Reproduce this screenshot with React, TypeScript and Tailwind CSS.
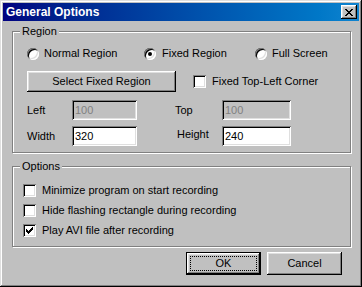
import React from 'react';

const raised =
  'shadow-[inset_-1px_-1px_#000,inset_1px_1px_#fff,inset_-2px_-2px_#808080,inset_2px_2px_#dfdfdf]';
const sunken =
  'shadow-[inset_1px_1px_#808080,inset_-1px_-1px_#fff,inset_2px_2px_#000,inset_-2px_-2px_#dfdfdf]';

function Radio({ checked }: { checked?: boolean }) {
  return (
    <span className={`w-[12px] h-[12px] rounded-full bg-white flex items-center justify-center shrink-0 ${sunken}`}>
      {checked && <span className="w-[4px] h-[4px] rounded-full bg-black" />}
    </span>
  );
}

function CheckMark() {
  const px: [number, number][] = [
    [6, 0], [5, 1], [6, 1], [0, 2], [4, 2], [5, 2], [6, 2],
    [0, 3], [1, 3], [3, 3], [4, 3], [5, 3],
    [0, 4], [1, 4], [2, 4], [3, 4], [4, 4],
    [1, 5], [2, 5], [3, 5], [2, 6],
  ];
  return (
    <svg width="7" height="7" viewBox="0 0 7 7" shapeRendering="crispEdges">
      {px.map(([x, y]) => <rect key={`${x}-${y}`} x={x} y={y} width="1" height="1" fill="#000" />)}
    </svg>
  );
}

function Check({ checked }: { checked?: boolean }) {
  return (
    <span className={`w-[13px] h-[13px] bg-white flex items-center justify-center shrink-0 ${sunken}`}>
      {checked && <CheckMark />}
    </span>
  );
}

function CloseGlyph() {
  const rows = ['xx....xx', '.xx..xx.', '..xxxx..', '...xx...', '..xxxx..', '.xx..xx.', 'xx....xx'];
  return (
    <svg width="8" height="7" viewBox="0 0 8 7" shapeRendering="crispEdges">
      {rows.flatMap((r, y) =>
        r.split('').map((c, x) => (c === 'x' ? <rect key={`${x}-${y}`} x={x} y={y} width="1" height="1" fill="#000" /> : null))
      )}
    </svg>
  );
}

function Field({ value, disabled, w }: { value: string; disabled?: boolean; w: string }) {
  return (
    <div className={`${w} h-[20px] flex items-center pl-[3px] ${disabled ? 'bg-[#c0c0c0] text-[#808080]' : 'bg-white text-black'} ${sunken}`}>
      {value}
    </div>
  );
}

function Group({ label, h, children }: { label: string; h: string; children: React.ReactNode }) {
  return (
    <div className={`relative w-[339px] ${h} border border-[#808080] shadow-[inset_1px_1px_#fff,1px_1px_#fff]`}>
      <span className="absolute left-[7px] -top-[8px] px-[2px] bg-[#c0c0c0] leading-[14px]">{label}</span>
      {children}
    </div>
  );
}

export default function App() {
  return (
    <div className="w-[362px] h-[287px] bg-[#c0c0c0] p-[3px] flex flex-col font-['Liberation_Sans',Arial,sans-serif] text-[11px] text-black shadow-[inset_-1px_-1px_#000,inset_1px_1px_#dfdfdf,inset_-2px_-2px_#808080,inset_2px_2px_#fff]">
      <div className="h-[18px] flex items-center justify-between pl-[3px] pr-[2px] bg-gradient-to-r from-[#000080] to-[#1084d0]">
        <span className="text-white font-bold text-[12px]">General Options</span>
        <span className={`w-[16px] h-[14px] bg-[#c0c0c0] flex items-center justify-center ${raised}`}>
          <CloseGlyph />
        </span>
      </div>

      <div className="pl-[9px] mt-[10px]">
        <Group label="Region" h="h-[122px]">
          <div className="flex flex-col pl-[14px] pt-[15px]">
            <div className="flex h-[13px] items-center">
              <div className="w-[117px] flex items-center gap-[5px]"><Radio />Normal Region</div>
              <div className="w-[111px] flex items-center gap-[6px]"><Radio checked />Fixed Region</div>
              <div className="flex items-center gap-[5px]"><Radio />Full Screen</div>
            </div>
            <div className="flex items-center mt-[11px]">
              <div className={`w-[149px] h-[21px] flex items-center justify-center ${raised}`}>Select Fixed Region</div>
              <div className="flex items-center gap-[6px] ml-[17px]"><Check />Fixed Top-Left Corner</div>
            </div>
            <div className="flex items-center mt-[8px]">
              <span className="w-[45px]">Left</span>
              <Field value="100" disabled w="w-[65px]" />
              <span className="ml-[38px] w-[47px]">Top</span>
              <Field value="100" disabled w="w-[69px]" />
            </div>
            <div className="flex items-center mt-[6px]">
              <span className="w-[45px]">Width</span>
              <Field value="320" w="w-[65px]" />
              <span className="ml-[40px] w-[45px] mb-[3px]">Height</span>
              <Field value="240" w="w-[69px]" />
            </div>
          </div>
        </Group>

        <div className="mt-[13px]">
          <Group label="Options" h="h-[81px]">
            <div className="flex flex-col gap-[7px] pl-[10px] pt-[17px]">
              <div className="flex items-center gap-[6px] h-[13px]"><Check />Minimize program on start recording</div>
              <div className="flex items-center gap-[6px] h-[13px]"><Check />Hide flashing rectangle during recording</div>
              <div className="flex items-center gap-[6px] h-[13px]"><Check checked />Play AVI file after recording</div>
            </div>
          </Group>
        </div>
      </div>

      <div className="flex justify-end gap-[6px] pr-[17px] mt-[5px]">
        <div className="w-[75px] h-[23px] border border-black">
          <div className={`w-full h-full p-[3px] ${raised}`}>
            <div className="w-full h-full border border-dotted border-black flex items-center justify-center">OK</div>
          </div>
        </div>
        <div className={`w-[75px] h-[23px] flex items-center justify-center ${raised}`}>Cancel</div>
      </div>
    </div>
  );
}
